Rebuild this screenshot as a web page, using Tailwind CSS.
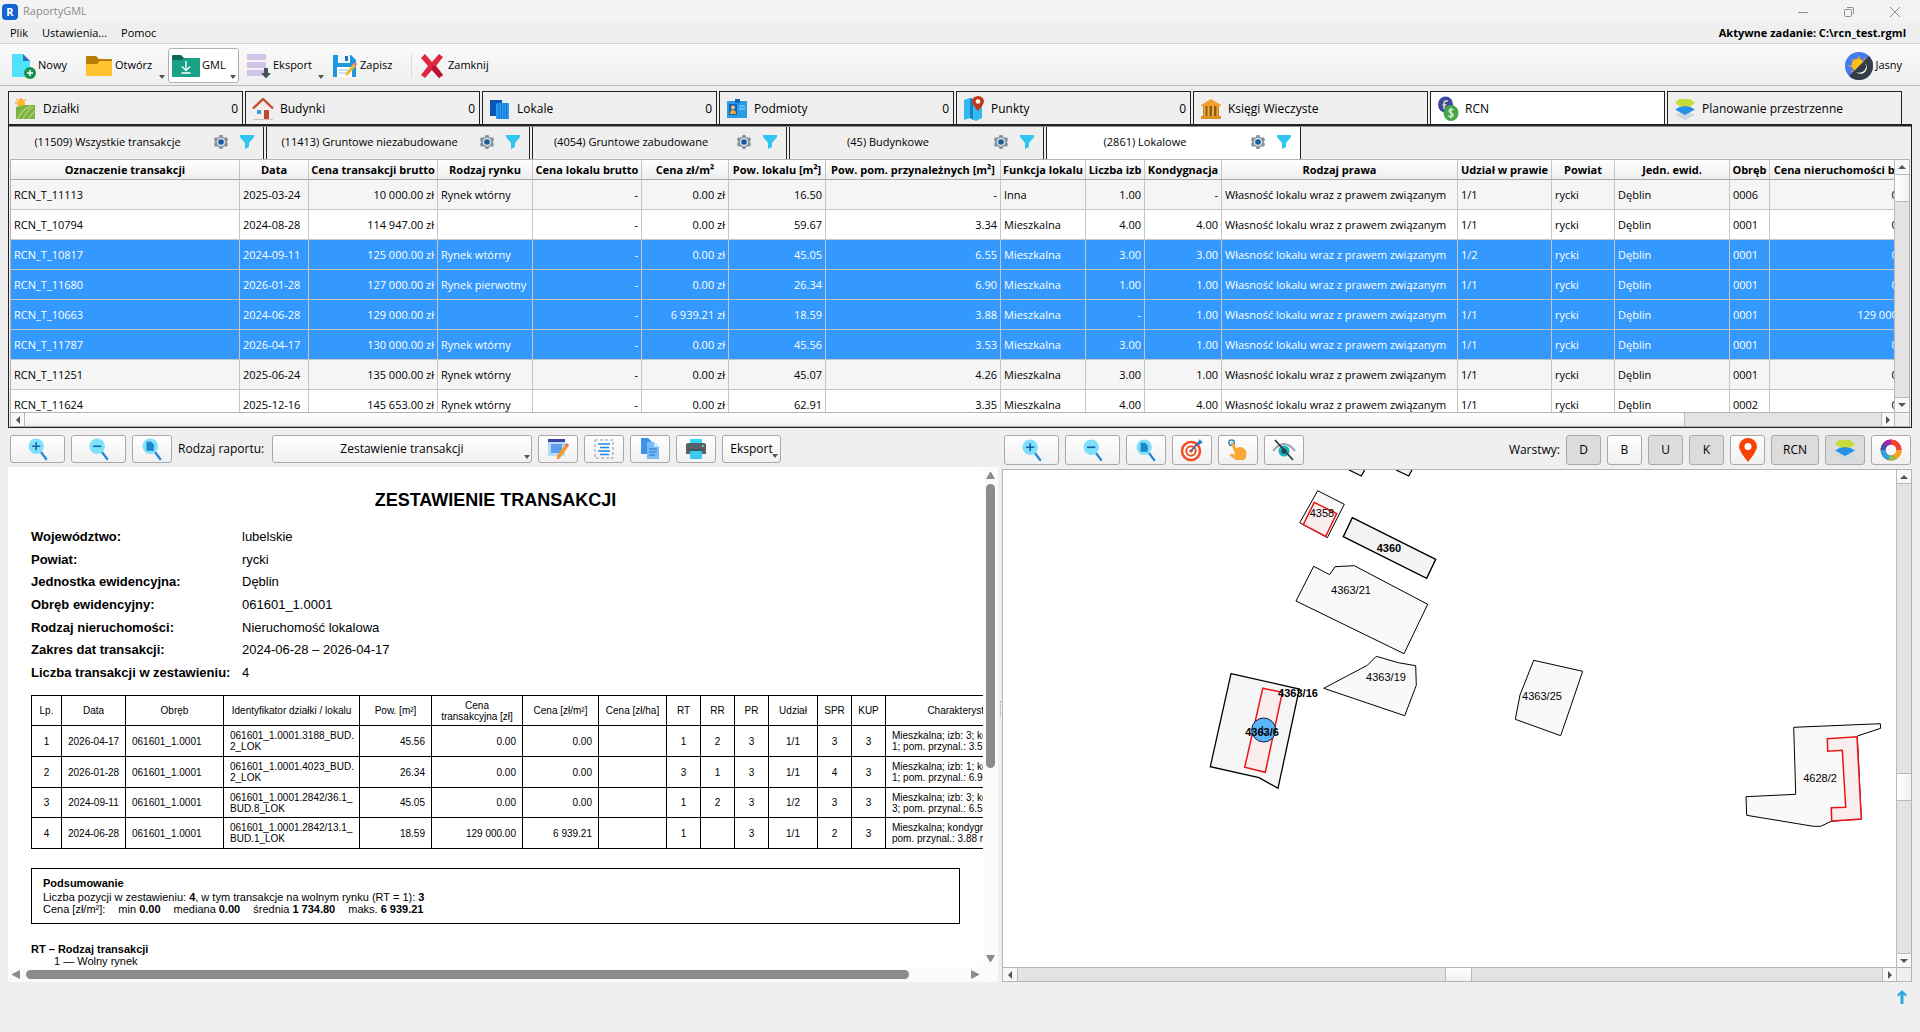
<!DOCTYPE html>
<html lang="pl">
<head>
    <meta charset="UTF-8">
    <meta name="viewport" content="width=device-width, initial-scale=1.0">
    <title>RaportyGML</title>
    <script src="https://cdn.jsdelivr.net/npm/@tailwindcss/browser@4"></script>
</head>
<body class="bg-[#efefef] text-black text-[11px] font-['Open_Sans','Noto_Sans',sans-serif] min-h-screen flex flex-col">

    <!-- icon set -->
    <svg class="hidden">
        <symbol id="i-caret" viewBox="0 0 6 4"><path d="M0 0h6L3 4z" fill="#555"/></symbol>
        <symbol id="i-new" viewBox="0 0 24 26"><path d="M0 1h11l7 7v16H0z" fill="#4fe3fb"/><path d="M11 1l7 7h-7z" fill="#2f6fc4"/><circle cx="18" cy="20" r="6" fill="#1b9150"/><path d="M18 17v6M15 20h6" stroke="#fff" stroke-width="1.4"/></symbol>
        <symbol id="i-folder" viewBox="0 0 26 22"><path d="M0 2q0-1 1-1h9l3 3h12q1 0 1 1v8H0z" fill="#b97c04"/><path d="M0 10q0-1 1-1h10l3-3h11q1 0 1 1v13q0 1-1 1H1q-1 0-1-1z" fill="#ffc331"/></symbol>
        <symbol id="i-gml" viewBox="0 0 28 24"><path d="M0 2q0-1 1-1h8l3 3v5H0z" fill="#0a6b54"/><path d="M0 6l10 0 2-2h15q1 0 1 1v17q0 1-1 1H1q-1 0-1-1z" fill="#18a184"/><path d="M14 7v9M10 12.500l4 4 4-4M9.500 19h9" stroke="#fff" stroke-width="1.300" fill="none"/></symbol>
        <symbol id="i-export" viewBox="0 0 24 26"><path d="M0 1h19v6H0zM0 9h19v6H0zM0 17h19v6H0z" fill="#d0c5e6"/><path d="M17 15h4v5h3l-5 5.500-5-5.500h3z" fill="#45535e"/></symbol>
        <symbol id="i-save" viewBox="0 0 24 24"><path d="M0 1h18l5 5v17H0z" fill="#2196dc"/><path d="M5 1h12v8H5z" fill="#eaf6fd"/><path d="M12 2h3v5h-3z" fill="#2c6fae"/><path d="M4 13h15v10H4z" fill="#fff"/><path d="M6 16h9M6 19h7" stroke="#8cc4ea"/><path d="M13 19l7-9 3 2-8 9-3 1z" fill="#f6b72c"/><path d="M20 10l3 2 1-2-3-2z" fill="#e0798c"/></symbol>
        <symbol id="i-x" viewBox="0 0 24 24"><path d="M1 4l4-4 7 8 7-8 4 3-7 9 7 9-4 3-7-8-7 8-4-3 7-9z" fill="#df2540"/><path d="M12 12l4 0 7 9-4 3-7-8z" fill="#b91432"/></symbol>
        <symbol id="i-theme" viewBox="0 0 28 28"><circle cx="14" cy="14" r="14" fill="#4479f2"/><path d="M23.900 4.100A14 14 0 0 1 4.100 23.900z" fill="#333d47"/><path d="M14 4v3M7 7l2 2M3.500 14h3M6 20l2-1M20 6l-1 2" stroke="#e8a12e" stroke-width="1.500"/><path d="M18.500 9.500A6.500 6.500 0 1 0 9.500 18.500z" fill="#ffbe16"/><path d="M20 11a6 6 0 1 1-9 9 7 7 0 0 0 6 0 6 6 0 0 0 3-9z" fill="#f2f4f7"/></symbol>

        <symbol id="i-field" viewBox="0 0 22 22"><circle cx="6" cy="5" r="4" fill="#ffb629"/><path d="M6 0v2M1 1l1.500 1.500M11 1L9.500 2.500M0 5h2" stroke="#f08a1c"/><path d="M1 9l9-2h10v14H1z" fill="#7db343"/><path d="M3 21Q6 12 16 8M8 21q3-7 10-12M13 21q2-4 7-8" stroke="#a9d36c" stroke-width="1.500" fill="none"/></symbol>
        <symbol id="i-house" viewBox="0 0 22 22"><path d="M4 10l7-7 7 7v11H4z" fill="#f4efed"/><path d="M1 21h20v1H1z" fill="#c9c4c2"/><path d="M1 10.500L11 1l10 9.500" stroke="#c6492a" stroke-width="2.400" fill="none"/><path d="M5 12h4v4H5z" fill="#33a0dc"/><path d="M12 12h5v9h-5z" fill="#c6492a"/></symbol>
        <symbol id="i-door" viewBox="0 0 22 22"><path d="M1 2h12v16H1z" fill="#0b57b8"/><path d="M7 6l2-1h11v16H7z" fill="#2b9bf0"/><path d="M10 5v16M12.500 5v16M15 5v16M17.500 5v16" stroke="#1571cf"/></symbol>
        <symbol id="i-card" viewBox="0 0 22 22"><path d="M1 3h20v17H1z" fill="#2a9be4"/><path d="M9 1h5v4H9z" fill="#1668b0"/><path d="M3 6h8v11H3z" fill="#0d62b5"/><circle cx="7" cy="9.500" r="2" fill="#f1c27b"/><path d="M4 16q0-4 3-4t3 4z" fill="#f3a92f"/><path d="M13 8h6M13 11h6" stroke="#7cc8f6" stroke-width="1.300"/></symbol>
        <symbol id="i-point" viewBox="0 0 22 26"><path d="M1 4l6-2 6 2 6-2v20l-6 3-6-3-6 2z" fill="#35b8ee"/><path d="M7 2l3 1v21l-3-2z" fill="#1483c8"/><path d="M15 15Q9 8 9 5.500a6 5.500 0 0 1 12 0Q21 8 15 15z" fill="#c2391a"/><circle cx="15" cy="5.500" r="2.300" fill="#fff"/></symbol>
        <symbol id="i-bank" viewBox="0 0 22 22"><path d="M11 1l10 6v1H1V7z" fill="#f0a02d"/><path d="M3 8h16v10H3z" fill="#8a5a16"/><path d="M4.500 8v10M8.500 8v10M13 8v10M17.500 8v10" stroke="#f4ab3b" stroke-width="2"/><path d="M1 18h20v3H1z" fill="#e0901f"/></symbol>
        <symbol id="i-coins" viewBox="0 0 22 26"><ellipse cx="8.500" cy="8.500" rx="7.500" ry="8" fill="#3949a3"/><path d="M11 5H9Q7 5 7 8v5M5.500 9h4" stroke="#f3d9a0" stroke-width="1.500" fill="none"/><ellipse cx="14" cy="17" rx="7.500" ry="8" fill="#45a54b"/><path d="M16.500 14Q14 12.500 12.500 14t1.500 3 2 3-5 0M14 11.500v11" stroke="#e6f4d8" stroke-width="1.200" fill="none"/></symbol>
        <symbol id="i-layers" viewBox="0 0 22 22"><path d="M11 12l10 5-10 5-10-5z" fill="#cfd8dc"/><path d="M11 6l10 5.500-10 5.500-10-5.500z" fill="#2490e8"/><path d="M5 1h11l5 4-5 4-5-1-4 1-6-4z" fill="#c5dc3b"/></symbol>
        <symbol id="i-gear" viewBox="0 0 14 14"><path d="M5.500 0h3l.6 2 1.700.8L13 2.300l1 2.700-1.300 2L14 9l-1 2.700-2.200-.5-1.700.8-.6 2h-3l-.6-2-1.700-.8-2.200.5L0 9l1.300-2L0 5l1-2.700 2.200.5 1.700-.8z" fill="#8a9299"/><circle cx="7" cy="7" r="4.200" fill="#d5e3ee"/><circle cx="7" cy="7" r="2.800" fill="#1d5aa0"/></symbol>
        <symbol id="i-filter" viewBox="0 0 14 14"><path d="M0 0h14v2L9 8v4l-4 2V8L0 2z" fill="#2fc7f2"/></symbol>

        <symbol id="i-lens" viewBox="0 0 22 26"><path d="M14 16l6 8" stroke="#2389d8" stroke-width="2.500" stroke-linecap="round"/><circle cx="9" cy="10" r="8.500" fill="#7fe0fb"/></symbol>
        <symbol id="i-zin" viewBox="0 0 22 26"><path d="M14 16l6 8" stroke="#2389d8" stroke-width="2.500" stroke-linecap="round"/><circle cx="9" cy="10" r="8.500" fill="#7fe0fb"/><path d="M9 5.500v9M4.500 10h9" stroke="#1961a8" stroke-width="1.800"/></symbol>
        <symbol id="i-zout" viewBox="0 0 22 26"><path d="M14 16l6 8" stroke="#2389d8" stroke-width="2.500" stroke-linecap="round"/><circle cx="9" cy="10" r="8.500" fill="#7fe0fb"/><path d="M4.500 10h9" stroke="#1961a8" stroke-width="1.800"/></symbol>
        <symbol id="i-zdoc" viewBox="0 0 22 26"><path d="M14 16l6 8" stroke="#2389d8" stroke-width="2.500" stroke-linecap="round"/><circle cx="9" cy="10" r="8.500" fill="#7fe0fb"/><path d="M5 5h5l3 3v7H5z" fill="#1c87c8"/></symbol>
        <symbol id="i-edit" viewBox="0 0 22 22"><path d="M1 1h17v3H1z" fill="#3a41a8"/><path d="M1 4h17v14H1z" fill="#b4dbfa"/><path d="M4 6h11v9H4z" fill="#5f9ee8"/><path d="M10 18l8-11 3 2-8 11-3 2z" fill="#f79a1d"/><path d="M18 7l3 2 1-2-3-2z" fill="#d8626e"/></symbol>
        <symbol id="i-select" viewBox="0 0 22 22"><path d="M2 2h18v18H2z" fill="none" stroke="#8f9ba5" stroke-dasharray="3 2"/><path d="M5 6h12M7 9.500h9M5 13h12M7 16.500h9" stroke="#1e88e5" stroke-width="1.300"/></symbol>
        <symbol id="i-copy" viewBox="0 0 22 22"><path d="M2 0h7l4 4v12H2z" fill="#3a93e8"/><path d="M8 4h7l5 5v12H8z" fill="#78bdf8"/><path d="M15 4l5 5h-5z" fill="#c4e3fc"/><path d="M10 11h8M10 14h8M10 17h6" stroke="#1f6cc4" stroke-width="1.200"/></symbol>
        <symbol id="i-print" viewBox="0 0 22 22"><path d="M5 1h12v5H5z" fill="#33d6f5"/><path d="M1 7q0-2 2-2h16q2 0 2 2v9H1z" fill="#56636c"/><circle cx="18" cy="8" r="1" fill="#7fe3a0"/><path d="M5 12h12v9H5z" fill="#39c8ee"/><path d="M4 12h14" stroke="#37424a" stroke-width="1.500"/></symbol>
        <symbol id="i-target" viewBox="0 0 24 24"><circle cx="11" cy="13" r="9" fill="#fff" stroke="#f04e23" stroke-width="2.600"/><circle cx="11" cy="13" r="4.700" fill="none" stroke="#f04e23" stroke-width="2"/><circle cx="11" cy="13" r="1.800" fill="#f04e23"/><path d="M11 13l7-8" stroke="#2a5da8" stroke-width="1.600"/><path d="M17 5l3-4 1 2 2 1-4 3z" fill="#2f7dd0"/></symbol>
        <symbol id="i-hand" viewBox="0 0 24 24"><circle cx="5" cy="4" r="3" fill="none" stroke="#2f86c8" stroke-width="1.600"/><path d="M4 4l2-1 4 7 2-1 2 0 3 0 2 2 2 2v6l-2 4h-9l-7-5 1-2 5 1z" fill="#fba833"/></symbol>
        <symbol id="i-eye" viewBox="0 0 24 24"><path d="M1 13Q12-1 23 13" fill="none" stroke="#9aa5ad" stroke-width="2"/><circle cx="12" cy="13" r="5.500" fill="#19b2bd"/><circle cx="12" cy="13" r="2.600" fill="#12495a"/><path d="M3 2l18 20" stroke="#2c3940" stroke-width="1.800"/></symbol>
        <symbol id="i-pin" viewBox="0 0 18 24"><path d="M9 24Q0 13 0 8.500a9 8.500 0 0 1 18 0Q18 13 9 24z" fill="#fb4206"/><circle cx="9" cy="8.500" r="3.500" fill="#fff"/></symbol>
        <symbol id="i-wheel" viewBox="0 0 22 22"><g fill="none" stroke-width="5"><circle cx="11" cy="11" r="8" stroke="#e53935"/><path d="M11 3a8 8 0 0 1 8 8" stroke="#f5402c"/><path d="M19 11a8 8 0 0 1-4 7" stroke="#fba31a"/><path d="M15 18a8 8 0 0 1-6 .7" stroke="#8bc34a"/><path d="M9 18.700A8 8 0 0 1 3 11" stroke="#29a6e8"/><path d="M3 11a8 8 0 0 1 2.300-5.600" stroke="#3f51b5"/><path d="M5.300 5.400A8 8 0 0 1 11 3" stroke="#9c27b0"/></g></symbol>
        <symbol id="i-up" viewBox="0 0 12 14"><path d="M6 0l5 5-1.300 1.500L7.500 4.500V14h-3V4.500L2.300 6.500 1 5z" fill="#2ba8e0"/></symbol>
    </svg>

    <!-- title bar -->
    <header class="flex items-center h-[22px] px-[2px] pt-px bg-[#f3f3f3] text-[#8c8c8c]">
        <span class="w-4 h-4 rounded bg-[#1463d2] text-white font-bold text-[11px] leading-4 text-center">R</span>
        <h1 class="ml-[5px]">RaportyGML</h1>
        <div class="ml-auto mr-[17px] flex items-center gap-[34px] text-[#8c8c8c]">
            <button aria-label="Minimalizuj"><svg class="w-3 h-3" viewBox="0 0 12 12" fill="none" stroke="currentColor"><path d="M1 6.500h10"/></svg></button>
            <button aria-label="Przywróć"><svg class="w-3 h-3" viewBox="0 0 12 12" fill="none" stroke="currentColor"><rect x="1.500" y="3.500" width="7" height="7" rx="1"/><path d="M4 1.500h5q1.500 0 1.500 1.500v5"/></svg></button>
            <button aria-label="Zamknij okno"><svg class="w-3 h-3" viewBox="0 0 12 12" fill="none" stroke="currentColor"><path d="M1 1l10 10M11 1L1 11"/></svg></button>
        </div>
    </header>

    <!-- menu -->
    <nav class="flex items-center h-[22px] pl-[10px] pr-[14px] pt-px border-b border-[#d4d4d4]">
        <button>Plik</button>
        <button class="ml-[14px]">Ustawienia...</button>
        <button class="ml-[14px]">Pomoc</button>
        <span class="ml-auto font-bold">Aktywne zadanie: C:\rcn_test.rgml</span>
    </nav>

    <!-- main toolbar -->
    <div class="flex items-center h-[42px] pl-2 pr-[18px] pt-[2px] bg-linear-to-b from-[#fafafa] to-[#efefef] border-b border-[#b9b9b9]">
        <button class="flex items-center gap-[2px] w-[74px] pl-1"><svg class="w-6 h-[26px]"><use href="#i-new"/></svg>Nowy</button>
        <button class="relative flex items-center gap-[3px] w-[86px] h-[35px] pl-1"><svg class="w-[26px] h-[22px]"><use href="#i-folder"/></svg>Otwórz<svg class="absolute right-[3px] bottom-1 w-[6px] h-1"><use href="#i-caret"/></svg></button>
        <button class="relative flex items-center gap-[2px] w-[71px] h-[35px] pl-[3px] bg-white border border-[#b0b0b0] rounded-[3px]"><svg class="w-7 h-6"><use href="#i-gml"/></svg>GML<svg class="absolute right-[2px] bottom-[3px] w-[6px] h-1"><use href="#i-caret"/></svg></button>
        <button class="relative flex items-center gap-[2px] w-[86px] h-[35px] ml-1 pl-1"><svg class="w-6 h-[26px]"><use href="#i-export"/></svg>Eksport<svg class="absolute right-[5px] bottom-1 w-[6px] h-1"><use href="#i-caret"/></svg></button>
        <button class="flex items-center gap-[3px] w-[82px] pl-1"><svg class="w-6 h-6"><use href="#i-save"/></svg>Zapisz</button>
        <span class="w-px h-6 bg-[#dcdcdc]"></span>
        <button class="flex items-center gap-1 ml-1 pl-1"><svg class="w-6 h-6"><use href="#i-x"/></svg>Zamknij</button>
        <button class="flex items-center gap-[2px] ml-auto"><svg class="w-7 h-7"><use href="#i-theme"/></svg>Jasny</button>
    </div>

    <main class="flex-1 flex flex-col px-2 pt-[5px]">

        <!-- dataset tabs -->
        <div class="grid grid-cols-8 gap-[2px] pr-[10px] text-xs" role="tablist">
            <button role="tab" class="flex items-center gap-[6px] h-[33px] pl-[6px] pr-1 pt-px border border-b-0 border-[#222]"><svg class="w-[22px] h-[22px]"><use href="#i-field"/></svg>Działki<span class="ml-auto">0</span></button>
            <button role="tab" class="flex items-center gap-[6px] h-[33px] pl-[6px] pr-1 pt-px border border-b-0 border-[#222]"><svg class="w-[22px] h-[22px]"><use href="#i-house"/></svg>Budynki<span class="ml-auto">0</span></button>
            <button role="tab" class="flex items-center gap-[6px] h-[33px] pl-[6px] pr-1 pt-px border border-b-0 border-[#222]"><svg class="w-[22px] h-[22px]"><use href="#i-door"/></svg>Lokale<span class="ml-auto">0</span></button>
            <button role="tab" class="flex items-center gap-[6px] h-[33px] pl-[6px] pr-1 pt-px border border-b-0 border-[#222]"><svg class="w-[22px] h-[22px]"><use href="#i-card"/></svg>Podmioty<span class="ml-auto">0</span></button>
            <button role="tab" class="flex items-center gap-[6px] h-[33px] pl-[6px] pr-1 pt-px border border-b-0 border-[#222]"><svg class="w-[22px] h-[26px]"><use href="#i-point"/></svg>Punkty<span class="ml-auto">0</span></button>
            <button role="tab" class="flex items-center gap-[6px] h-[33px] pl-[6px] pr-1 pt-px border border-b-0 border-[#222]"><svg class="w-[22px] h-[22px]"><use href="#i-bank"/></svg>Księgi Wieczyste</button>
            <button role="tab" aria-selected="true" class="flex items-center gap-[6px] h-[33px] pl-[6px] pr-1 pt-px bg-white border border-b-0 border-[#222]"><svg class="w-[22px] h-[26px]"><use href="#i-coins"/></svg>RCN</button>
            <button role="tab" class="flex items-center gap-[6px] h-[33px] pl-[6px] pr-1 pt-px border border-b-0 border-[#222]"><svg class="w-[22px] h-[22px]"><use href="#i-layers"/></svg>Planowanie przestrzenne</button>
        </div>

        <section class="border border-t-2 border-[#222]">

            <!-- transaction tabs -->
            <div class="flex gap-[2px] border-t border-[#8a8a8a]" role="tablist">
                <div class="flex items-center w-[255px] h-8 pr-[9px] pb-[2px] border-r border-[#222]"><button role="tab" class="flex-1 pr-2">(11509) Wszystkie transakcje</button><button aria-label="Ustawienia" class="mr-3"><svg class="w-[14px] h-[14px]"><use href="#i-gear"/></svg></button><button aria-label="Filtr"><svg class="w-[14px] h-[14px]"><use href="#i-filter"/></svg></button></div>
                <div class="flex items-center w-[264px] h-8 pr-[9px] pb-[2px] border-x border-[#222]"><button role="tab" class="flex-1 pr-2">(11413) Gruntowe niezabudowane</button><button aria-label="Ustawienia" class="mr-3"><svg class="w-[14px] h-[14px]"><use href="#i-gear"/></svg></button><button aria-label="Filtr"><svg class="w-[14px] h-[14px]"><use href="#i-filter"/></svg></button></div>
                <div class="flex items-center w-[255px] h-8 pr-[9px] pb-[2px] border-x border-[#222]"><button role="tab" class="flex-1 pr-2">(4054) Gruntowe zabudowane</button><button aria-label="Ustawienia" class="mr-3"><svg class="w-[14px] h-[14px]"><use href="#i-gear"/></svg></button><button aria-label="Filtr"><svg class="w-[14px] h-[14px]"><use href="#i-filter"/></svg></button></div>
                <div class="flex items-center w-[255px] h-8 pr-[9px] pb-[2px] border-x border-[#222]"><button role="tab" class="flex-1 pr-2">(45) Budynkowe</button><button aria-label="Ustawienia" class="mr-3"><svg class="w-[14px] h-[14px]"><use href="#i-gear"/></svg></button><button aria-label="Filtr"><svg class="w-[14px] h-[14px]"><use href="#i-filter"/></svg></button></div>
                <div class="flex items-center w-[255px] h-8 pr-[9px] pb-[2px] bg-white border-x border-[#222]"><button role="tab" aria-selected="true" class="flex-1 pr-2">(2861) Lokalowe</button><button aria-label="Ustawienia" class="mr-3"><svg class="w-[14px] h-[14px]"><use href="#i-gear"/></svg></button><button aria-label="Filtr"><svg class="w-[14px] h-[14px]"><use href="#i-filter"/></svg></button></div>
            </div>

            <div class="flex mx-px border border-[#b4b4b4] border-b-0">
                <div class="flex-1 min-w-0 h-[252px] overflow-hidden bg-white">
                    <table class="table-fixed border-separate border-spacing-0 w-[1917px] whitespace-nowrap">
                        <colgroup>
                            <col class="w-[229px]"><col class="w-[69px]"><col class="w-[129px]"><col class="w-[95px]"><col class="w-[109px]"><col class="w-[87px]"><col class="w-[97px]"><col class="w-[175px]"><col class="w-[85px]"><col class="w-[59px]"><col class="w-[77px]"><col class="w-[236px]"><col class="w-[94px]"><col class="w-[63px]"><col class="w-[115px]"><col class="w-[40px]"><col class="w-[158px]">
                        </colgroup>
                        <thead>
                            <tr id="deals-head" class="h-5 bg-linear-to-b from-white to-[#ededed] font-bold"></tr>
                        </thead>
                        <tbody id="deals-body"></tbody>
                    </table>
                </div>
                <div class="w-[15px] flex flex-col bg-[#e3e3e3] border-l border-[#b9b9b9]">
                    <span class="h-[15px] flex items-center justify-center bg-[#f8f8f8] border-b border-[#b9b9b9]"><svg class="w-2 h-1" viewBox="0 0 8 4"><path d="M0 4h8L4 0z" fill="#555"/></svg></span>
                    <span class="h-[27px] bg-linear-to-r from-white to-[#f0f0f0] border-b border-[#b9b9b9]"></span>
                    <span class="h-[15px] mt-auto flex items-center justify-center bg-[#f8f8f8] border-t border-[#b9b9b9]"><svg class="w-2 h-1" viewBox="0 0 8 4"><path d="M0 0h8L4 4z" fill="#555"/></svg></span>
                </div>
            </div>
            <div class="flex h-[15px] mx-px bg-[#e3e3e3] border border-[#b4b4b4]">
                <span class="w-[14px] flex items-center justify-center bg-[#f8f8f8] border-r border-[#b9b9b9]"><svg class="w-1 h-2" viewBox="0 0 4 8"><path d="M4 0v8L0 4z" fill="#555"/></svg></span>
                <span class="w-[1660px] shrink bg-linear-to-b from-white to-[#f0f0f0] border-r border-[#b9b9b9]"></span>
                <span class="w-[14px] ml-auto flex items-center justify-center bg-[#f8f8f8] border-x border-[#b9b9b9]"><svg class="w-1 h-2" viewBox="0 0 4 8"><path d="M0 0v8l4-4z" fill="#555"/></svg></span>
                <span class="w-[14px] bg-[#efefef]"></span>
            </div>
        </section>

        <div class="flex-1 flex pt-[7px]">

            <!-- report -->
            <section class="w-[52%] flex flex-col">
                <div class="flex items-center gap-[6px] pl-[2px] mb-1 text-xs">
                    <button aria-label="Powiększ" class="flex justify-center items-center w-[55px] h-7 bg-linear-to-b from-white to-[#f0f0f0] border border-[#a9a9a9] rounded-[3px]"><svg class="w-5 h-6"><use href="#i-zin"/></svg></button>
                    <button aria-label="Pomniejsz" class="flex justify-center items-center w-[55px] h-7 bg-linear-to-b from-white to-[#f0f0f0] border border-[#a9a9a9] rounded-[3px]"><svg class="w-5 h-6"><use href="#i-zout"/></svg></button>
                    <button aria-label="Cała strona" class="flex justify-center items-center w-10 h-7 bg-linear-to-b from-white to-[#f0f0f0] border border-[#a9a9a9] rounded-[3px]"><svg class="w-5 h-6"><use href="#i-zdoc"/></svg></button>
                    <label for="report-type" class="w-[88px]">Rodzaj raportu:</label>
                    <div class="relative w-[260px]">
                        <select id="report-type" class="appearance-none w-full h-7 px-2 [text-align-last:center] bg-linear-to-b from-white to-[#f0f0f0] border border-[#a9a9a9] rounded-[3px]"><option>Zestawienie transakcji</option></select>
                        <svg class="absolute right-[2px] bottom-1 w-[6px] h-1"><use href="#i-caret"/></svg>
                    </div>
                    <button aria-label="Edytuj szablon" class="flex justify-center items-center w-10 h-7 bg-linear-to-b from-white to-[#f0f0f0] border border-[#a9a9a9] rounded-[3px]"><svg class="w-[22px] h-[22px]"><use href="#i-edit"/></svg></button>
                    <button aria-label="Zaznacz wszystko" class="flex justify-center items-center w-10 h-7 bg-linear-to-b from-white to-[#f0f0f0] border border-[#a9a9a9] rounded-[3px]"><svg class="w-[22px] h-[22px]"><use href="#i-select"/></svg></button>
                    <button aria-label="Kopiuj" class="flex justify-center items-center w-10 h-7 bg-linear-to-b from-white to-[#f0f0f0] border border-[#a9a9a9] rounded-[3px]"><svg class="w-[22px] h-[22px]"><use href="#i-copy"/></svg></button>
                    <button aria-label="Drukuj" class="flex justify-center items-center w-10 h-7 bg-linear-to-b from-white to-[#f0f0f0] border border-[#a9a9a9] rounded-[3px]"><svg class="w-[22px] h-[22px]"><use href="#i-print"/></svg></button>
                    <button class="relative w-[59px] h-7 bg-linear-to-b from-white to-[#f0f0f0] border border-[#a9a9a9] rounded-[3px]">Eksport<svg class="absolute right-[2px] bottom-1 w-[6px] h-1"><use href="#i-caret"/></svg></button>
                </div>

                <div class="flex-1 flex flex-col bg-white">
                    <div class="flex-1 flex">
                        <div class="flex-1 min-w-0 h-[500px] overflow-hidden pl-[23px] font-['Liberation_Sans',Arial,sans-serif] text-[11px] leading-3">
                            <div class="w-[929px] pt-5">
                                <h2 class="text-lg leading-[26px] font-bold text-center">ZESTAWIENIE TRANSAKCJI</h2>
                                <dl class="grid grid-cols-[211px_1fr] auto-rows-fr items-center h-[158px] mt-[13px] text-[13px]">
                                    <dt class="font-bold">Województwo:</dt><dd>lubelskie</dd>
                                    <dt class="font-bold">Powiat:</dt><dd>rycki</dd>
                                    <dt class="font-bold">Jednostka ewidencyjna:</dt><dd>Dęblin</dd>
                                    <dt class="font-bold">Obręb ewidencyjny:</dt><dd>061601_1.0001</dd>
                                    <dt class="font-bold">Rodzaj nieruchomości:</dt><dd>Nieruchomość lokalowa</dd>
                                    <dt class="font-bold">Zakres dat transakcji:</dt><dd>2024-06-28 – 2026-04-17</dd>
                                    <dt class="font-bold">Liczba transakcji w zestawieniu:</dt><dd>4</dd>
                                </dl>

                                <table class="table-fixed border-collapse w-[1010px] mt-[11px] text-[10px] leading-[11px] text-center [&_td]:border [&_th]:border [&_td]:px-[6px] [&_th]:font-normal">
                                    <colgroup>
                                        <col class="w-[30px]"><col class="w-[64px]"><col class="w-[98px]"><col class="w-[136px]"><col class="w-[72px]"><col class="w-[91px]"><col class="w-[76px]"><col class="w-[68px]"><col class="w-[34px]"><col class="w-[34px]"><col class="w-[34px]"><col class="w-[49px]"><col class="w-[34px]"><col class="w-[34px]"><col class="w-[156px]">
                                    </colgroup>
                                    <thead>
                                        <tr class="h-[30px]"><th>Lp.</th><th>Data</th><th>Obręb</th><th>Identyfikator działki / lokalu</th><th>Pow. [m²]</th><th>Cena<br>transakcyjna [zł]</th><th>Cena [zł/m²]</th><th>Cena [zł/ha]</th><th>RT</th><th>RR</th><th>PR</th><th>Udział</th><th>SPR</th><th>KUP</th><th>Charakterystyka</th></tr>
                                    </thead>
                                    <tbody class="whitespace-nowrap">
                                        <tr class="h-[31px]"><td>1</td><td>2026-04-17</td><td class="text-left">061601_1.0001</td><td class="text-left">061601_1.0001.3188_BUD.<br>2_LOK</td><td class="text-right">45.56</td><td class="text-right">0.00</td><td class="text-right">0.00</td><td></td><td>1</td><td>2</td><td>3</td><td>1/1</td><td>3</td><td>3</td><td class="text-left">Mieszkalna; izb: 3; kondygnacja:<br>1; pom. przynal.: 3.53 m²</td></tr>
                                        <tr class="h-[31px]"><td>2</td><td>2026-01-28</td><td class="text-left">061601_1.0001</td><td class="text-left">061601_1.0001.4023_BUD.<br>2_LOK</td><td class="text-right">26.34</td><td class="text-right">0.00</td><td class="text-right">0.00</td><td></td><td>3</td><td>1</td><td>3</td><td>1/1</td><td>4</td><td>3</td><td class="text-left">Mieszkalna; izb: 1; kondygnacja:<br>1; pom. przynal.: 6.90 m²</td></tr>
                                        <tr class="h-[30px]"><td>3</td><td>2024-09-11</td><td class="text-left">061601_1.0001</td><td class="text-left">061601_1.0001.2842/36.1_<br>BUD.8_LOK</td><td class="text-right">45.05</td><td class="text-right">0.00</td><td class="text-right">0.00</td><td></td><td>1</td><td>2</td><td>3</td><td>1/2</td><td>3</td><td>3</td><td class="text-left">Mieszkalna; izb: 3; kondygnacja:<br>3; pom. przynal.: 6.55 m²</td></tr>
                                        <tr class="h-[31px]"><td>4</td><td>2024-06-28</td><td class="text-left">061601_1.0001</td><td class="text-left">061601_1.0001.2842/13.1_<br>BUD.1_LOK</td><td class="text-right">18.59</td><td class="text-right">129 000.00</td><td class="text-right">6 939.21</td><td></td><td>1</td><td></td><td>3</td><td>1/1</td><td>2</td><td>3</td><td class="text-left">Mieszkalna; kondygnacja: 1;<br>pom. przynal.: 3.88 m²</td></tr>
                                    </tbody>
                                </table>

                                <div class="mt-[19px] px-[11px] py-[6px] border border-black">
                                    <h3 class="font-bold leading-4">Podsumowanie</h3>
                                    <p>Liczba pozycji w zestawieniu: <b>4</b>, w tym transakcje na wolnym rynku (RT = 1): <b>3</b></p>
                                    <p class="flex gap-[13px] pb-[2px]"><span>Cena [zł/m²]:</span><span>min <b>0.00</b></span><span>mediana <b>0.00</b></span><span>średnia <b>1 734.80</b></span><span>maks. <b>6 939.21</b></span></p>
                                </div>

                                <h3 class="mt-[19px] font-bold">RT – Rodzaj transakcji</h3>
                                <p class="pl-[23px]">1 — Wolny rynek</p>
                            </div>
                        </div>
                        <div class="w-[15px] flex flex-col items-center py-[5px] bg-[#fbfbfb]">
                            <svg class="w-[9px] h-2" viewBox="0 0 9 8"><path d="M0 7h9L5 0H4z" fill="#8b8b8b"/></svg>
                            <span class="w-[9px] h-[58%] mt-1 rounded-full bg-[#8b8b8b]"></span>
                            <svg class="w-[9px] h-2 mt-auto" viewBox="0 0 9 8"><path d="M0 1h9L5 8H4z" fill="#8b8b8b"/></svg>
                        </div>
                    </div>
                    <div class="h-[15px] flex items-center pl-1 pr-[19px] bg-[#fbfbfb]">
                        <svg class="w-2 h-[9px]" viewBox="0 0 8 9"><path d="M8 0v9L0 5V4z" fill="#8b8b8b"/></svg>
                        <span class="w-[883px] h-[9px] ml-[6px] rounded-full bg-[#8b8b8b]"></span>
                        <svg class="w-2 h-[9px] ml-auto" viewBox="0 0 8 9"><path d="M0 0v9l8-4V4z" fill="#8b8b8b"/></svg>
                    </div>
                </div>
            </section>

            <div class="w-1 flex items-center justify-center"><span class="h-4 border-l border-dotted border-[#aaa]"></span></div>

            <!-- map -->
            <section class="flex-1 min-w-0 flex flex-col">
                <div class="flex items-center gap-[6px] pl-[2px] mb-1 text-xs">
                    <button aria-label="Powiększ" class="flex justify-center items-center w-[55px] h-[30px] bg-linear-to-b from-white to-[#f0f0f0] border border-[#a9a9a9] rounded-[3px]"><svg class="w-5 h-6"><use href="#i-zin"/></svg></button>
                    <button aria-label="Pomniejsz" class="flex justify-center items-center w-[55px] h-[30px] bg-linear-to-b from-white to-[#f0f0f0] border border-[#a9a9a9] rounded-[3px]"><svg class="w-5 h-6"><use href="#i-zout"/></svg></button>
                    <button aria-label="Pokaż wszystko" class="flex justify-center items-center w-10 h-[30px] bg-linear-to-b from-white to-[#f0f0f0] border border-[#a9a9a9] rounded-[3px]"><svg class="w-5 h-6"><use href="#i-zdoc"/></svg></button>
                    <button aria-label="Wyśrodkuj" class="flex justify-center items-center w-10 h-[30px] bg-linear-to-b from-white to-[#f0f0f0] border border-[#a9a9a9] rounded-[3px]"><svg class="w-6 h-6"><use href="#i-target"/></svg></button>
                    <button aria-label="Wskaż obiekt" class="flex justify-center items-center w-10 h-[30px] bg-linear-to-b from-white to-[#f0f0f0] border border-[#a9a9a9] rounded-[3px]"><svg class="w-[22px] h-[22px]"><use href="#i-hand"/></svg></button>
                    <button aria-label="Ukryj" class="flex justify-center items-center w-10 h-[30px] bg-linear-to-b from-white to-[#f0f0f0] border border-[#a9a9a9] rounded-[3px]"><svg class="w-6 h-6"><use href="#i-eye"/></svg></button>
                    <span class="ml-auto">Warstwy:</span>
                    <button aria-pressed="true" class="w-[35px] h-[30px] bg-[#dcdcdc] border border-[#a9a9a9] rounded-[3px]">D</button>
                    <button class="w-[35px] h-[30px] bg-linear-to-b from-white to-[#f0f0f0] border border-[#a9a9a9] rounded-[3px]">B</button>
                    <button aria-pressed="true" class="w-[35px] h-[30px] bg-[#dcdcdc] border border-[#a9a9a9] rounded-[3px]">U</button>
                    <button aria-pressed="true" class="w-[35px] h-[30px] bg-[#dcdcdc] border border-[#a9a9a9] rounded-[3px]">K</button>
                    <button aria-label="Punkty" class="flex justify-center items-center w-[35px] h-[30px] bg-linear-to-b from-white to-[#f0f0f0] border border-[#a9a9a9] rounded-[3px]"><svg class="w-[18px] h-6"><use href="#i-pin"/></svg></button>
                    <button aria-pressed="true" class="w-12 h-[30px] bg-[#dcdcdc] border border-[#a9a9a9] rounded-[3px]">RCN</button>
                    <button aria-label="Plany" aria-pressed="true" class="flex justify-center items-center w-10 h-[30px] bg-[#dcdcdc] border border-[#a9a9a9] rounded-[3px]"><svg class="w-[22px] h-[22px]"><use href="#i-layers"/></svg></button>
                    <button aria-label="Kolory" class="flex justify-center items-center w-10 h-[30px] mr-px bg-linear-to-b from-white to-[#f0f0f0] border border-[#a9a9a9] rounded-[3px]"><svg class="w-[22px] h-[22px]"><use href="#i-wheel"/></svg></button>
                </div>

                <div class="flex-1 flex flex-col border border-[#b4b4b4]">
                    <div class="flex-1 flex">
                        <div class="flex-1 min-w-0 bg-white overflow-hidden">
                            <svg class="block w-[893px] h-[497px] font-['Liberation_Sans',Arial,sans-serif] text-[11px]" viewBox="0 0 893 497" text-anchor="middle">
                                <g fill="#f9f9f9" stroke="#000">
                                    <path d="M346 0l12.300 6 3.400-6M393 0l12.700 6 3.300-6" fill="#f2f2f2" stroke-width="1.300"/>
                                    <path d="M314.700 20.700l26.600 13.600-17 33.400-27.600-15z"/>
                                    <path d="M349.300 47.700l83.400 41.600-9 19-83.400-41.600z" fill="#f3f3f3" stroke-width="1.400"/>
                                    <path d="M310.700 96.300l16 8.400 5.300-8 19.300-1 73.400 38.600-23.700 49.400-108-52.700z"/>
                                    <path d="M373.300 186.300l22 6.400 17.400 3 .6 19.600-11.600 30.400-81-27.400 43.600-23z"/>
                                    <path d="M530.700 190.300l49 11-22 64.400-45.400-16.400 4.700-24.300z"/>
                                    <path d="M228 203.700l68.300 15.300-21.300 99.300-19-10.600-48.700-11z" fill="#f6f6f6" stroke-width="1.300"/>
                                    <path d="M790.700 257.300l86.600-3.600.4 4.600-23.400 7.700 4 83-30 2.300-10.600 5-7.400 0-66.600-11-.7-18.600 49.700-2.400z"/>
                                </g>
                                <g fill="#faeded" stroke="#e81515" stroke-width="1.500">
                                    <path d="M311.300 32.300l22.400 11.400-11 22.600-22.400-11.600z"/>
                                    <path d="M259.700 218.300l19.600 4-17 80-20.600-5z"/>
                                    <path d="M824.300 268.700l29.700-2 4.300 82.300-29.600 2-.4-13.300 14.400-.4-3.400-57-14.600 1z"/>
                                </g>
                                <circle cx="260.700" cy="260" r="12" fill="#5bb5f8" stroke="#123"/>
                                <text x="319" y="47">4358</text>
                                <text x="386" y="82" font-weight="bold">4360</text>
                                <text x="348" y="124">4363/21</text>
                                <text x="383" y="211">4363/19</text>
                                <text x="539" y="230">4363/25</text>
                                <text x="295" y="227" font-weight="bold">4363/16</text>
                                <text x="259" y="266" font-weight="bold">4363/6</text>
                                <text x="261" y="264">L</text>
                                <text x="817" y="312">4628/2</text>
                            </svg>
                        </div>
                        <div class="w-[15px] flex flex-col bg-[#e3e3e3] border-l border-[#b9b9b9]">
                            <span class="h-[14px] flex items-center justify-center bg-[#f8f8f8] border-b border-[#b9b9b9]"><svg class="w-2 h-1" viewBox="0 0 8 4"><path d="M0 4h8L4 0z" fill="#555"/></svg></span>
                            <span class="basis-[289px] shrink"></span>
                            <span class="h-[28px] bg-linear-to-r from-white to-[#f0f0f0] border-y border-[#b9b9b9]"></span>
                            <span class="h-[14px] mt-auto flex items-center justify-center bg-[#f8f8f8] border-t border-[#b9b9b9]"><svg class="w-2 h-1" viewBox="0 0 8 4"><path d="M0 0h8L4 4z" fill="#555"/></svg></span>
                        </div>
                    </div>
                    <div class="h-[14px] flex bg-[#e3e3e3] border-t border-[#b4b4b4]">
                        <span class="w-[15px] flex items-center justify-center bg-[#f8f8f8] border-r border-[#b9b9b9]"><svg class="w-1 h-2" viewBox="0 0 4 8"><path d="M4 0v8L0 4z" fill="#555"/></svg></span>
                        <span class="w-[27px] ml-[47%] bg-linear-to-b from-white to-[#f0f0f0] border-x border-[#b9b9b9]"></span>
                        <span class="w-[15px] ml-auto flex items-center justify-center bg-[#f8f8f8] border-x border-[#b9b9b9]"><svg class="w-1 h-2" viewBox="0 0 4 8"><path d="M0 0v8l4-4z" fill="#555"/></svg></span>
                        <span class="w-[14px] bg-[#efefef]"></span>
                    </div>
                </div>
            </section>
        </div>
    </main>

    <footer class="h-[50px] flex justify-end pt-2 pr-3">
        <button aria-label="Do góry" class="w-3 h-[14px]"><svg class="w-3 h-[14px]"><use href="#i-up"/></svg></button>
    </footer>

    <script>
        const columns = ['Oznaczenie transakcji', 'Data', 'Cena transakcji brutto', 'Rodzaj rynku', 'Cena lokalu brutto', 'Cena zł/m²', 'Pow. lokalu [m²]', 'Pow. pom. przynależnych [m²]', 'Funkcja lokalu', 'Liczba izb', 'Kondygnacja', 'Rodzaj prawa', 'Udział w prawie', 'Powiat', 'Jedn. ewid.', 'Obręb', 'Cena nieruchomości brutto'];
        const numeric = [2, 4, 5, 6, 7, 9, 10, 16];
        const right = 'Własność lokalu wraz z prawem związanym';

        // id, date, price, market, price per m2, area, annex area, function, rooms, floor, share, precinct, property price, selected
        const deals = [
            ['RCN_T_11113', '2025-03-24', '10 000.00 zł', 'Rynek wtórny', '0.00 zł', '16.50', '-', 'Inna', '1.00', '-', '1/1', '0006', '0.00 zł', false],
            ['RCN_T_10794', '2024-08-28', '114 947.00 zł', '', '0.00 zł', '59.67', '3.34', 'Mieszkalna', '4.00', '4.00', '1/1', '0001', '0.00 zł', false],
            ['RCN_T_10817', '2024-09-11', '125 000.00 zł', 'Rynek wtórny', '0.00 zł', '45.05', '6.55', 'Mieszkalna', '3.00', '3.00', '1/2', '0001', '0.00 zł', true],
            ['RCN_T_11680', '2026-01-28', '127 000.00 zł', 'Rynek pierwotny', '0.00 zł', '26.34', '6.90', 'Mieszkalna', '1.00', '1.00', '1/1', '0001', '0.00 zł', true],
            ['RCN_T_10663', '2024-06-28', '129 000.00 zł', '', '6 939.21 zł', '18.59', '3.88', 'Mieszkalna', '-', '1.00', '1/1', '0001', '129 000.00 zł', true],
            ['RCN_T_11787', '2026-04-17', '130 000.00 zł', 'Rynek wtórny', '0.00 zł', '45.56', '3.53', 'Mieszkalna', '3.00', '1.00', '1/1', '0001', '0.00 zł', true],
            ['RCN_T_11251', '2025-06-24', '135 000.00 zł', 'Rynek wtórny', '0.00 zł', '45.07', '4.26', 'Mieszkalna', '3.00', '1.00', '1/1', '0001', '0.00 zł', false],
            ['RCN_T_11624', '2025-12-16', '145 653.00 zł', 'Rynek wtórny', '0.00 zł', '62.91', '3.35', 'Mieszkalna', '4.00', '4.00', '1/1', '0002', '0.00 zł', false]
        ];

        document.getElementById('deals-head').innerHTML = columns.map(name =>
            `<th class="border-r border-b border-r-[#c6c6c6] border-b-[#a9a9a9] p-0 pt-px text-center">${name}</th>`).join('');

        document.getElementById('deals-body').innerHTML = deals.map((d, i) => {
            const cells = [d[0], d[1], d[2], d[3], '-', d[4], d[5], d[6], d[7], d[8], d[9], right, d[10], 'rycki', 'Dęblin', d[11], d[12]];
            const row = d[13] ? 'bg-[#3399ff] text-white' : i % 2 ? 'bg-white' : 'bg-[#f5f5f5]';
            return `<tr class="h-[30px] ${row}">` + cells.map((c, n) =>
                `<td class="border-r border-b border-[#c6c6c6] px-[3px] pt-[2px] pb-0 ${numeric.includes(n) ? 'text-right' : 'text-left'}">${c}</td>`).join('') + '</tr>';
        }).join('');
    </script>
</body>
</html>
